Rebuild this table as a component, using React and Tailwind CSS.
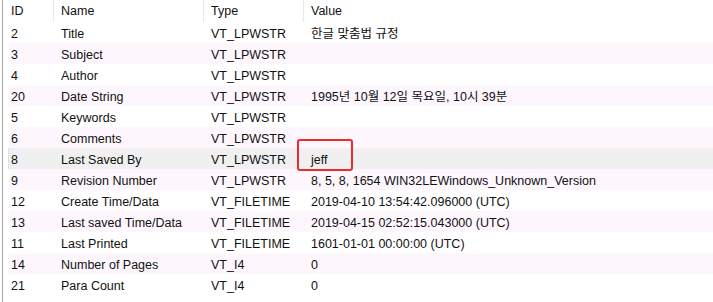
import React from "react";

const rows = [
  ["2", "Title", "VT_LPWSTR", "한글 맞춤법 규정"],
  ["3", "Subject", "VT_LPWSTR", ""],
  ["4", "Author", "VT_LPWSTR", ""],
  ["20", "Date String", "VT_LPWSTR", "1995년 10월 12일 목요일, 10시 39분"],
  ["5", "Keywords", "VT_LPWSTR", ""],
  ["6", "Comments", "VT_LPWSTR", ""],
  ["8", "Last Saved By", "VT_LPWSTR", "jeff"],
  ["9", "Revision Number", "VT_LPWSTR", "8, 5, 8, 1654 WIN32LEWindows_Unknown_Version"],
  ["12", "Create Time/Data", "VT_FILETIME", "2019-04-10 13:54:42.096000 (UTC)"],
  ["13", "Last saved Time/Data", "VT_FILETIME", "2019-04-15 02:52:15.043000 (UTC)"],
  ["11", "Last Printed", "VT_FILETIME", "1601-01-01 00:00:00 (UTC)"],
  ["14", "Number of Pages", "VT_I4", "0"],
  ["21", "Para Count", "VT_I4", "0"],
];

export default function App() {
  return (
    <div
      className="w-[713px] h-[302px] bg-white flex text-[12.5px] text-[#111] overflow-hidden"
      style={{ fontFamily: '"Liberation Sans", "Noto Sans CJK KR", sans-serif' }}
    >
      <div className="w-[2px] shrink-0" />
      <div className="w-px shrink-0 bg-[#a8a8a8]" />
      <div className="w-[6px] shrink-0" />
      <div className="flex-1 flex flex-col">
        <div className="flex h-[22px] items-center">
          <div className="w-[44px] pl-[2px] h-full flex items-center">ID</div>
          <div className="w-[150px] pl-[7px] h-full flex items-center border-l border-[#e8e8e8]">Name</div>
          <div className="w-[100px] pl-[7px] h-full flex items-center border-l border-[#e8e8e8]">Type</div>
          <div className="flex-1 pl-[7px] h-full flex items-center border-l border-[#e8e8e8]">Value</div>
        </div>
        {rows.map((r, i) => {
          const selected = r[1] === "Last Saved By";
          const bg = selected ? "bg-[#f0f0f0]" : i % 2 === 1 ? "bg-[#fdf7fd]" : "bg-white";
          return (
            <div key={i} className={`relative flex h-[21px] items-center pt-[3px] ${bg}`}>
              {selected && <div className="absolute left-[-1px] top-0 bottom-0 w-px bg-[#cfe3f5]" />}
              <div className="w-[44px] pl-[2px]">{r[0]}</div>
              <div className="w-[150px] pl-[8px]">{r[1]}</div>
              <div className="w-[100px] pl-[8px]">{r[2]}</div>
              <div className="flex-1 pl-[8px] relative whitespace-nowrap">
                {r[3]}
                {selected && (
                  <div className="absolute z-10 left-[-6px] top-[-12px] w-[56px] h-[32px] border-[2px] border-[#f02a2a] rounded-[3px]" />
                )}
              </div>
            </div>
          );
        })}
      </div>
    </div>
  );
}
